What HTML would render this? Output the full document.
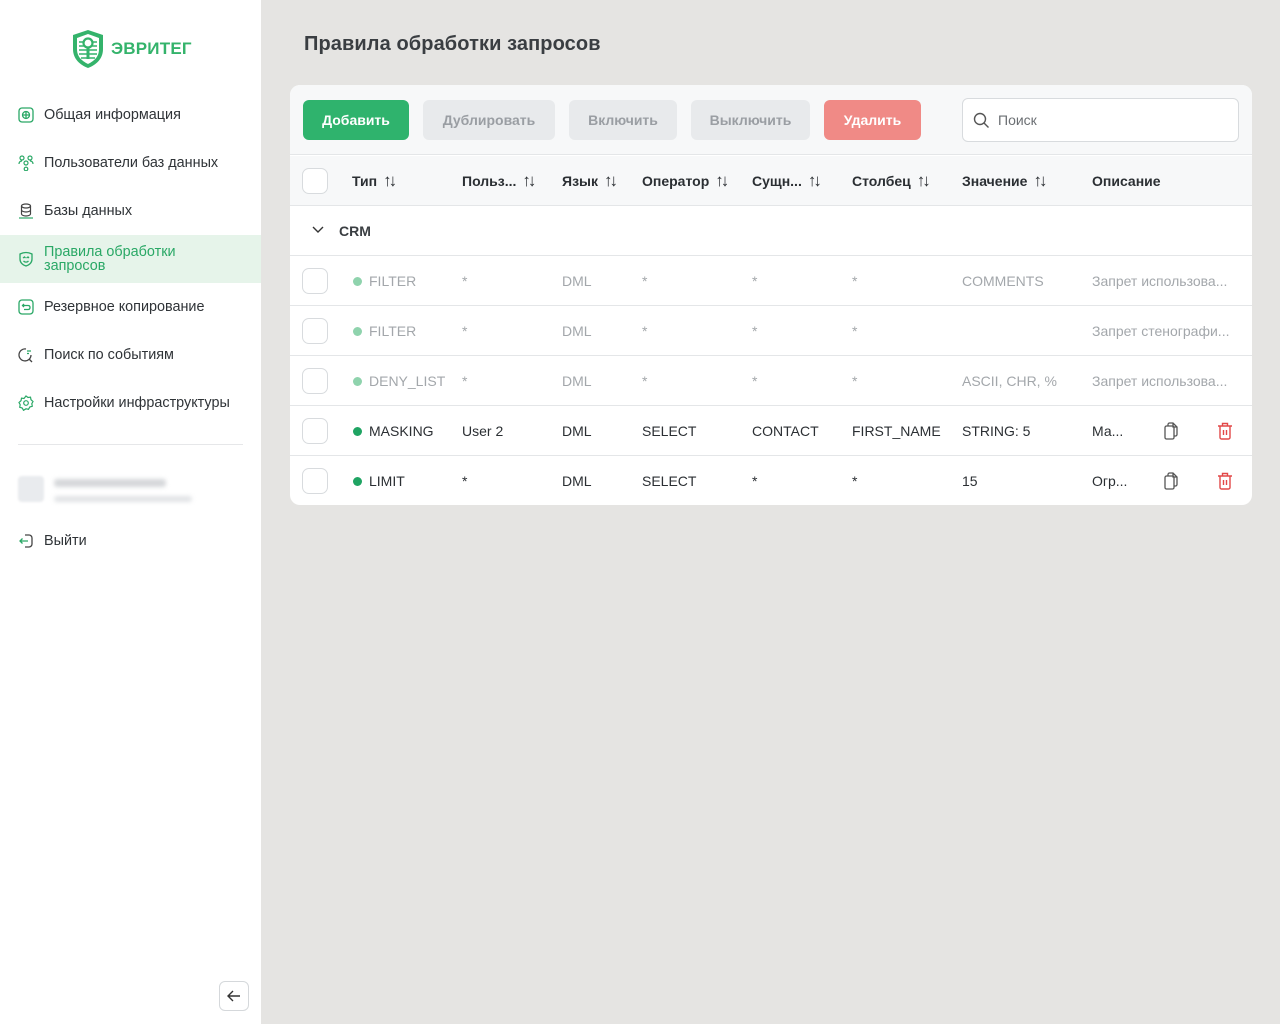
<!DOCTYPE html>
<html><head><meta charset="utf-8"><style>
*{box-sizing:border-box;margin:0;padding:0}
body{width:1280px;height:1024px;background:#e5e4e2;font-family:"Liberation Sans",sans-serif;position:relative;overflow:hidden;color:#2b2f33}
.side{position:absolute;left:0;top:0;width:261px;height:1024px;background:#fff}
.nav{position:absolute;left:0;width:261px;height:48px;display:flex;align-items:center;padding-left:44px;font-size:14.4px;color:#2f3337}
.nav svg{position:absolute;left:18px;top:50%;margin-top:-8px}
.act{background:#e6f4ea;color:#2aa866;line-height:14px}
.a{position:absolute}
h1{position:absolute;left:304px;top:33px;font-size:20px;font-weight:bold;color:#3a3e42;letter-spacing:.1px}
.card{position:absolute;left:290px;top:85px;width:962px;height:420px;background:#fff;border-radius:10px;overflow:hidden}
.tb{position:absolute;left:0;top:0;width:962px;height:70px;background:#f7f8f9;border-bottom:1px solid #e4e6e8}
.btn{position:absolute;top:15px;height:40px;border-radius:6px;font-size:14px;font-weight:bold;display:flex;align-items:center;justify-content:center;background:#e8eaec;color:#9a9ea3}
.hd{position:absolute;left:0;top:71px;width:962px;height:50px;background:#f7f8f9;border-bottom:1px solid #e4e6e8}
.row{position:absolute;left:0;width:962px;height:50px;border-bottom:1px solid #e4e6e8}
.c{position:absolute;top:0;line-height:50px;font-size:14px;white-space:nowrap}
.cb{position:absolute;left:12px;top:12px;width:26px;height:26px;border:1.5px solid #d8dbde;border-radius:7px;background:#fff}
.hdt{font-weight:bold;color:#2b2f33}
.s{font-weight:normal;font-size:17px;letter-spacing:-3px;margin-left:6px}
.dim{color:#a3a7ab}
.dot{display:inline-block;width:9px;height:9px;border-radius:50%;margin-right:7px;vertical-align:0}
</style></head><body>
<div class="side">
 <svg class="a" style="left:71px;top:29px" width="34" height="40" viewBox="0 0 34 40"><path d="M17 1L32 6V20C32 30 25 36 17 39C9 36 2 30 2 20V6Z" fill="#34b36b"/><path d="M17 5L28 9V20C28 28 23 32 17 35C11 32 6 28 6 20V9Z" fill="#fff"/><g stroke="#34b36b" stroke-width="1.5"><line x1="8" y1="13" x2="26" y2="13"/><line x1="8" y1="17" x2="26" y2="17"/><line x1="8" y1="21" x2="26" y2="21"/><line x1="8" y1="25" x2="26" y2="25"/><line x1="10" y1="29" x2="24" y2="29"/></g><circle cx="17" cy="14" r="4.5" fill="#fff" stroke="#34b36b" stroke-width="2.2"/><rect x="15.5" y="18" width="3" height="12" fill="#34b36b"/></svg>
 <div class="a" style="left:111px;top:39px;font-size:17px;font-weight:bold;color:#34b36b;letter-spacing:.2px">ЭВРИТЕГ</div>
 <div class="nav" style="top:91px"><svg width="16" height="16" viewBox="0 0 16 16" fill="none" stroke="#2aa866" stroke-width="1.3"><rect x="1" y="1" width="14" height="14" rx="3"/><circle cx="8" cy="8" r="3.5"/><path d="M8 4.5v7M4.5 8h7"/></svg>Общая информация</div>
 <div class="nav" style="top:139px"><svg width="16" height="16" viewBox="0 0 16 16" fill="none" stroke="#2aa866" stroke-width="1.2"><circle cx="4" cy="3" r="2"/><circle cx="12" cy="3" r="2"/><circle cx="8" cy="8" r="2"/><circle cx="8" cy="14" r="1.8"/><path d="M1 9c0-2 1-3 3-3M15 9c0-2-1-3-3-3"/></svg>Пользователи баз данных</div>
 <div class="nav" style="top:187px"><svg width="16" height="16" viewBox="0 0 16 16" fill="none" stroke="#444" stroke-width="1.2"><ellipse cx="8" cy="3" rx="4.5" ry="2"/><path d="M3.5 3v8c0 1 2 2 4.5 2s4.5-1 4.5-2V3M3.5 7c0 1 2 2 4.5 2s4.5-1 4.5-2"/><path d="M1 15h14" stroke="#2aa866"/></svg>Базы данных</div>
 <div class="nav act" style="top:235px"><svg width="16" height="16" viewBox="0 0 16 16" fill="none" stroke="#2aa866" stroke-width="1.3"><path d="M2 3c4-2 8-2 12 0v5c0 4-3 6-6 7-3-1-6-3-6-7z"/><path d="M5 7l1.5-1 1 1M8.5 7l1.5-1 1 1M5.5 10c1.5 1.5 3.5 1.5 5 0"/></svg>Правила обработки<br>запросов</div>
 <div class="nav" style="top:283px"><svg width="16" height="16" viewBox="0 0 16 16" fill="none" stroke="#2aa866" stroke-width="1.3"><rect x="1" y="1" width="14" height="14" rx="3"/><path d="M6 5L4.5 6.5 6 8M4.5 6.5H10c1.2 0 2 .8 2 2s-.8 2-2 2H6"/></svg>Резервное копирование</div>
 <div class="nav" style="top:331px"><svg width="16" height="16" viewBox="0 0 16 16" fill="none" stroke="#444" stroke-width="1.3"><path d="M13 8A6 6 0 1 1 8 2"/><path d="M11 12l3 3" /><path d="M9 4h4M9 6.5h2" stroke="#2aa866"/></svg>Поиск по событиям</div>
 <div class="nav" style="top:379px"><svg width="16" height="16" viewBox="0 0 16 16" fill="none" stroke="#2aa866" stroke-width="1.2"><path d="M8 1l2 1.5 2.5-.3.5 2.5 2 1.8-1.2 2.2.5 2.5-2.5.8-1.3 2.3L8 13.8 5.5 15.3 4.2 13l-2.5-.8.5-2.5L1 7.5l2-1.8.5-2.5 2.5.3z"/><circle cx="8" cy="8" r="2.3"/></svg>Настройки инфраструктуры</div>
 <div class="a" style="left:18px;top:444px;width:225px;height:1px;background:#e6e7e9"></div>
 <div class="a" style="left:18px;top:476px;width:26px;height:26px;background:#e9ebee;border-radius:4px;filter:blur(1px)"></div>
 <div class="a" style="left:54px;top:479px;width:112px;height:8px;background:#d5d7da;border-radius:3px;filter:blur(2px)"></div>
 <div class="a" style="left:54px;top:496px;width:138px;height:6px;background:#e1e3e6;border-radius:3px;filter:blur(2px)"></div>
 <div class="nav" style="top:517px"><svg width="16" height="16" viewBox="0 0 16 16" fill="none" stroke-width="1.3"><path d="M7 2h4a3 3 0 0 1 3 3v6a3 3 0 0 1-3 3H7" stroke="#444"/><path d="M10 8H2M4.5 5.5L2 8l2.5 2.5" stroke="#2aa866"/></svg>Выйти</div>
 <div class="a" style="left:219px;top:981px;width:30px;height:30px;border:1px solid #d5d8db;border-radius:6px;background:#fff"><svg style="position:absolute;left:7px;top:7px" width="14" height="14" viewBox="0 0 14 14" fill="none" stroke="#333" stroke-width="1.4"><path d="M13 7H1M6 2L1 7l5 5"/></svg></div>
</div>
<h1>Правила обработки запросов</h1>
<div class="card">
 <div class="tb">
  <div class="btn" style="left:13px;width:106px;background:#2fb36d;color:#fff">Добавить</div>
  <div class="btn" style="left:133px;width:132px">Дублировать</div>
  <div class="btn" style="left:279px;width:108px">Включить</div>
  <div class="btn" style="left:401px;width:119px">Выключить</div>
  <div class="btn" style="left:534px;width:97px;background:#f08a86;color:#fff">Удалить</div>
  <div class="a" style="left:672px;top:13px;width:277px;height:44px;border:1px solid #d8dbde;border-radius:6px;background:#fff;font-size:14px;color:#6b6f73;line-height:42px;padding-left:35px">Поиск<svg style="position:absolute;left:10px;top:13px" width="17" height="17" viewBox="0 0 17 17" fill="none" stroke="#555" stroke-width="1.4"><circle cx="7" cy="7" r="5.5"/><path d="M11 11l4.5 4.5"/></svg></div>
 </div>
 <div class="hd"><div class="cb"></div>
  <div class="c hdt" style="left:62px">Тип<span class="s">↑↓</span></div>
  <div class="c hdt" style="left:172px">Польз...<span class="s">↑↓</span></div>
  <div class="c hdt" style="left:272px">Язык<span class="s">↑↓</span></div>
  <div class="c hdt" style="left:352px">Оператор<span class="s">↑↓</span></div>
  <div class="c hdt" style="left:462px">Сущн...<span class="s">↑↓</span></div>
  <div class="c hdt" style="left:562px">Столбец<span class="s">↑↓</span></div>
  <div class="c hdt" style="left:672px">Значение<span class="s">↑↓</span></div>
  <div class="c hdt" style="left:802px">Описание</div>
 </div>
 <div class="row" style="top:121px"><svg class="a" style="left:22px;top:20px" width="12" height="8" viewBox="0 0 12 8" fill="none" stroke="#333" stroke-width="1.4"><path d="M1 1l5 5 5-5"/></svg><div class="c" style="left:49px;font-weight:bold;color:#3a3e42">CRM</div></div>
 <div class="row dim" style="top:171px"><div class="cb"></div><div class="c" style="left:63px"><span class="dot" style="background:#8fd3ad"></span>FILTER</div><div class="c" style="left:172px">*</div><div class="c" style="left:272px">DML</div><div class="c" style="left:352px">*</div><div class="c" style="left:462px">*</div><div class="c" style="left:562px">*</div><div class="c" style="left:672px">COMMENTS</div><div class="c" style="left:802px">Запрет использова...</div></div>
 <div class="row dim" style="top:221px"><div class="cb"></div><div class="c" style="left:63px"><span class="dot" style="background:#8fd3ad"></span>FILTER</div><div class="c" style="left:172px">*</div><div class="c" style="left:272px">DML</div><div class="c" style="left:352px">*</div><div class="c" style="left:462px">*</div><div class="c" style="left:562px">*</div><div class="c" style="left:802px">Запрет стенографи...</div></div>
 <div class="row dim" style="top:271px"><div class="cb"></div><div class="c" style="left:63px"><span class="dot" style="background:#8fd3ad"></span>DENY_LIST</div><div class="c" style="left:172px">*</div><div class="c" style="left:272px">DML</div><div class="c" style="left:352px">*</div><div class="c" style="left:462px">*</div><div class="c" style="left:562px">*</div><div class="c" style="left:672px">ASCII, CHR, %</div><div class="c" style="left:802px">Запрет использова...</div></div>
 <div class="row" style="top:321px"><div class="cb"></div><div class="c" style="left:63px"><span class="dot" style="background:#1fa463"></span>MASKING</div><div class="c" style="left:172px">User 2</div><div class="c" style="left:272px">DML</div><div class="c" style="left:352px">SELECT</div><div class="c" style="left:462px">CONTACT</div><div class="c" style="left:562px">FIRST_NAME</div><div class="c" style="left:672px">STRING: 5</div><div class="c" style="left:802px">Ма...</div>
  <svg class="a" style="left:873px;top:16px" width="16" height="18" viewBox="0 0 16 18" fill="none" stroke="#555" stroke-width="1.3"><path d="M5 4V2.5C5 1.7 5.7 1 6.5 1H10l4 4v7.5c0 .8-.7 1.5-1.5 1.5H11M10 1v4h4"/><rect x="2" y="4" width="9" height="13" rx="1.5"/></svg>
  <svg class="a" style="left:927px;top:16px" width="16" height="18" viewBox="0 0 16 18" fill="none" stroke="#e24848" stroke-width="1.4"><path d="M1 4h14M5.5 4V1.5h5V4M3 4v11.5c0 .8.7 1.5 1.5 1.5h7c.8 0 1.5-.7 1.5-1.5V4M6.5 8v5M9.5 8v5"/></svg></div>
 <div class="row" style="top:371px;border:none"><div class="cb"></div><div class="c" style="left:63px"><span class="dot" style="background:#1fa463"></span>LIMIT</div><div class="c" style="left:172px">*</div><div class="c" style="left:272px">DML</div><div class="c" style="left:352px">SELECT</div><div class="c" style="left:462px">*</div><div class="c" style="left:562px">*</div><div class="c" style="left:672px">15</div><div class="c" style="left:802px">Огр...</div>
  <svg class="a" style="left:873px;top:16px" width="16" height="18" viewBox="0 0 16 18" fill="none" stroke="#555" stroke-width="1.3"><path d="M5 4V2.5C5 1.7 5.7 1 6.5 1H10l4 4v7.5c0 .8-.7 1.5-1.5 1.5H11M10 1v4h4"/><rect x="2" y="4" width="9" height="13" rx="1.5"/></svg>
  <svg class="a" style="left:927px;top:16px" width="16" height="18" viewBox="0 0 16 18" fill="none" stroke="#e24848" stroke-width="1.4"><path d="M1 4h14M5.5 4V1.5h5V4M3 4v11.5c0 .8.7 1.5 1.5 1.5h7c.8 0 1.5-.7 1.5-1.5V4M6.5 8v5M9.5 8v5"/></svg></div>
</div>
</body></html>
